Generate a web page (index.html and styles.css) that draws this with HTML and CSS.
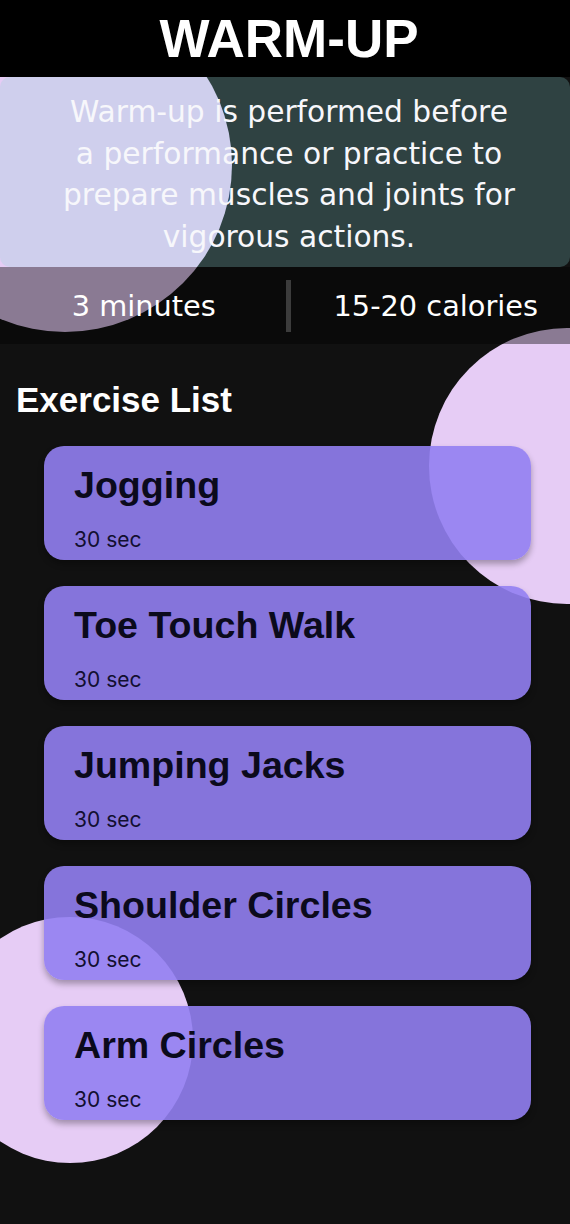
FILE: index.html
```html
<!DOCTYPE html>
<html lang="en">
<head>
<meta charset="utf-8">
<title>Warm-up</title>
<link rel="stylesheet" href="styles.css">
</head>
<body>
<div class="screen">
  <div class="blob blob-a"></div>
  <div class="blob blob-b"></div>
  <div class="blob blob-c"></div>

  <header class="topbar">
    <h1 class="topbar-title">WARM-UP</h1>
  </header>

  <section class="intro">
    <p class="intro-text">Warm-up is performed before a performance or practice to prepare muscles and joints for vigorous actions.</p>
  </section>

  <section class="stats">
    <span class="stat stat-left">3 minutes</span>
    <span class="stat-divider"></span>
    <span class="stat stat-right">15-20 calories</span>
  </section>

  <main class="exercises">
    <h2 class="section-title">Exercise List</h2>
    <ul class="cards">
      <li class="card"><h3 class="card-title">Jogging</h3><p class="card-time">30 sec</p></li>
      <li class="card"><h3 class="card-title">Toe Touch Walk</h3><p class="card-time">30 sec</p></li>
      <li class="card"><h3 class="card-title">Jumping Jacks</h3><p class="card-time">30 sec</p></li>
      <li class="card"><h3 class="card-title">Shoulder Circles</h3><p class="card-time">30 sec</p></li>
      <li class="card"><h3 class="card-title">Arm Circles</h3><p class="card-time">30 sec</p></li>
    </ul>
  </main>
</div>
</body>
</html>
```
FILE: styles.css
```css
* {
  box-sizing: border-box;
}

html, body {
  margin: 0;
  padding: 0;
  background: #111111;
}

.screen {
  position: relative;
  width: 570px;
  min-height: 1224px;
  overflow: hidden;
  background: #111111;
  font-family: "DejaVu Sans", sans-serif;
  color: #ffffff;
}

/* decorative circles on the free canvas */
.blob {
  position: absolute;
  z-index: 0;
  border-radius: 50%;
  background: #e6ccf5;
}

.blob-a {
  left: -102px;
  top: -2px;
  width: 334px;
  height: 334px;
}

.blob-b {
  left: 429px;
  top: 328px;
  width: 276px;
  height: 276px;
}

.blob-c {
  left: -53px;
  top: 917px;
  width: 246px;
  height: 246px;
}

.topbar {
  position: relative;
  z-index: 2;
  height: 77px;
  background: #000000;
  padding-left: 8px;
  text-align: center;
}

.topbar-title {
  margin: 0;
  font-family: "Liberation Sans", Arial, sans-serif;
  font-weight: 700;
  font-size: 53px;
  line-height: 77px;
  color: #ffffff;
}

.intro {
  position: relative;
  z-index: 1;
  height: 190px;
  padding: 14px 51px 0 59px;
  background: rgba(140, 214, 214, 0.25);
  border-radius: 10px;
}

.intro-text {
  margin: 0;
  font-size: 29.7px;
  line-height: 41.5px;
  text-align: center;
  color: #f7f7fb;
}

.stats {
  position: relative;
  z-index: 1;
  height: 77px;
  padding-left: 6px;
  display: grid;
  grid-template-columns: 1fr 5px 1fr;
  align-items: center;
  background: rgba(0, 0, 0, 0.4);
}

.stat {
  font-size: 28.8px;
  line-height: 40px;
  text-align: center;
  color: #ffffff;
}

.stat-left {
  padding-right: 4px;
}

.stat-right {
  padding-left: 11px;
}

.stat-divider {
  height: 52px;
  background: #3c3c3c;
}

.exercises {
  position: relative;
  z-index: 1;
  padding: 36px 39px 40px 16px;
}

.section-title {
  margin: 0 0 26px 0;
  font-family: "Liberation Sans", Arial, sans-serif;
  font-weight: 700;
  font-size: 35px;
  line-height: 40px;
  color: #ffffff;
}

.cards {
  list-style: none;
  margin: 0;
  padding: 0 0 0 28px;
  display: flex;
  flex-direction: column;
  gap: 26px;
}

.card {
  height: 114px;
  padding: 20px 30px 10px 30px;
  border-radius: 20px;
  background: rgba(146, 127, 242, 0.9);
  box-shadow: 0 4px 6px rgba(0, 0, 0, 0.3);
  display: flex;
  flex-direction: column;
  gap: 25px;
}

.card-title {
  margin: 0;
  font-family: "Liberation Sans", Arial, sans-serif;
  font-weight: 700;
  font-size: 37.6px;
  line-height: 38px;
  color: #0b0a1c;
}

.card-time {
  margin: 0;
  font-family: Inter, "Liberation Sans", sans-serif;
  font-size: 21px;
  line-height: 21px;
  color: #120f30;
}
```
